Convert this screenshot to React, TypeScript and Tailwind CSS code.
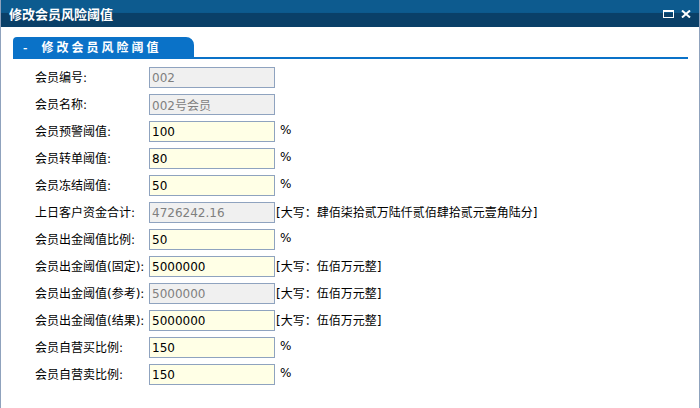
import React from "react";

type Row = {
  label: string;
  value: string;
  readOnly?: boolean;
  suffix?: string;
};

const rows: Row[] = [
  { label: "会员编号:", value: "002", readOnly: true },
  { label: "会员名称:", value: "002号会员", readOnly: true },
  { label: "会员预警阈值:", value: "100", suffix: "%" },
  { label: "会员转单阈值:", value: "80", suffix: "%" },
  { label: "会员冻结阈值:", value: "50", suffix: "%" },
  { label: "上日客户资金合计:", value: "4726242.16", readOnly: true, suffix: "[大写：肆佰柒拾贰万陆仟贰佰肆拾贰元壹角陆分]" },
  { label: "会员出金阈值比例:", value: "50", suffix: "%" },
  { label: "会员出金阈值(固定):", value: "5000000", suffix: "[大写：伍佰万元整]" },
  { label: "会员出金阈值(参考):", value: "5000000", readOnly: true, suffix: "[大写：伍佰万元整]" },
  { label: "会员出金阈值(结果):", value: "5000000", suffix: "[大写：伍佰万元整]" },
  { label: "会员自营买比例:", value: "150", suffix: "%" },
  { label: "会员自营卖比例:", value: "150", suffix: "%" },
];

const font = "font-['DejaVu_Sans','Noto_Sans_CJK_SC',sans-serif]";

const App = () => {
  return (
    <div className={`w-[700px] h-[408px] bg-white border-x border-[#8fa2bd] flex flex-col overflow-hidden ${font}`}>
      {/* Title bar */}
      <div className="h-[27px] shrink-0 flex items-center justify-between pl-2 pr-2 bg-[linear-gradient(to_bottom,#0d5b8f_0%,#0d5b8f_46%,#0a4068_50%,#0a4068_100%)]">
        <span className="text-white font-bold text-[13px] font-['Noto_Sans_CJK_SC',sans-serif]">修改会员风险阈值</span>
        <div className="flex items-center gap-[7px] mt-[1px]">
          <svg width="11" height="8" viewBox="0 0 11 8">
            <rect x="0.5" y="0.5" width="10" height="7" fill="none" stroke="white" strokeWidth="1" />
            <rect x="0" y="0" width="11" height="2" fill="white" />
          </svg>
          <svg width="10" height="8" viewBox="0 0 10 8">
            <path d="M1 0.5 L9 7.5 M9 0.5 L1 7.5" stroke="white" strokeWidth="2" />
          </svg>
        </div>
      </div>

      {/* Section header */}
      <div className="mt-[10px] ml-[12px] mr-[11px] border-b-2 border-[#0a72c8]">
        <div className="w-[181px] h-[20px] bg-[#0a72c8] rounded-tl-[4px] rounded-tr-[8px] flex items-center pl-[10px]">
          <span className="text-white font-bold text-[12px] font-['Noto_Sans_CJK_SC',sans-serif] tracking-[3px]">
            -<span className="ml-[11px]">修改会员风险阈值</span>
          </span>
        </div>
      </div>

      {/* Form */}
      <div className="flex flex-col gap-[6px] mt-[8px] pl-[34px]">
        {rows.map((r) => (
          <div key={r.label} className="flex items-center h-[21px]">
            <div className="w-[114px] text-[12px] text-black whitespace-nowrap">{r.label}</div>
            <input
              readOnly
              value={r.value}
              className={`w-[126px] h-[21px] border border-[#8fa3bf] px-[2px] text-[12px] outline-none ${font} ${
                r.readOnly ? "bg-[#f0f0f0] text-[#7f7f7f]" : "bg-[#ffffe6] text-black"
              }`}
            />
            {r.suffix === "%" ? (
              <span className="ml-[5px] -mt-[4px] text-[12px] text-black">%</span>
            ) : r.suffix ? (
              <span className="ml-[1px] text-[12px] text-black whitespace-nowrap">{r.suffix}</span>
            ) : null}
          </div>
        ))}
      </div>
    </div>
  );
};

export default App;
